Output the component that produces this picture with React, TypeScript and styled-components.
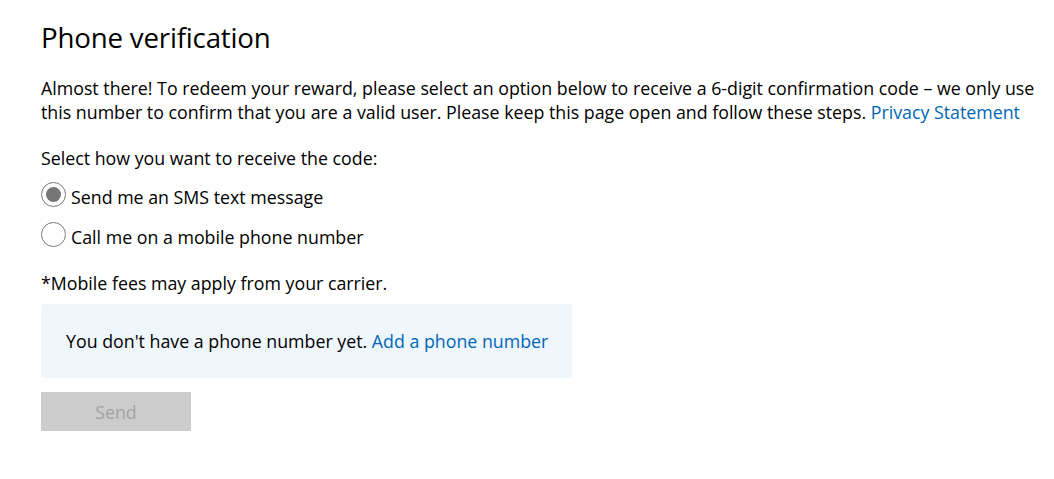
import styled, { createGlobalStyle } from "styled-components"

const GlobalStyle = createGlobalStyle`
  body {
    margin: 0;
    background: #ffffff;
    font-family: "Open Sans", "Noto Sans", sans-serif;
    color: #000000;
  }
`

const Page = styled.div`
  padding: 17px 0 0 41px;
  width: 1013px;
  height: 479px;
  box-sizing: border-box;
`

const Title = styled.h1`
  margin: 0;
  font-size: 27.7px;
  line-height: 40px;
  font-weight: 400;
  letter-spacing: -0.2px;
`

const Intro = styled.p`
  margin: 19px 0 0;
  font-size: 17.8px;
  line-height: 24px;
  white-space: nowrap;
`

const Link = styled.a`
  color: #0067b8;
  text-decoration: none;
  cursor: pointer;
`

const Label = styled.div`
  margin-top: 22px;
  font-size: 17.8px;
  line-height: 24px;
`

const Options = styled.div`
  display: flex;
  flex-direction: column;
  gap: 16px;
  margin-top: 15px;
`

const Option = styled.label`
  display: flex;
  align-items: center;
  gap: 5px;
  font-size: 17.8px;
  line-height: 24px;
  cursor: pointer;
`

const Radio = styled.span<{ $checked?: boolean }>`
  width: 25px;
  height: 25px;
  box-sizing: border-box;
  border: 1px solid #7a7a7a;
  border-radius: 50%;
  display: flex;
  align-items: center;
  justify-content: center;
  margin-top: -6px;
  &::after {
    content: "";
    width: 15px;
    height: 15px;
    border-radius: 50%;
    background: ${(p) => (p.$checked ? "#767676" : "transparent")};
  }
`

const Note = styled.div`
  margin-top: 22px;
  font-size: 17.8px;
  line-height: 24px;
`

const InfoBox = styled.div`
  margin-top: 9px;
  width: 531px;
  height: 74px;
  box-sizing: border-box;
  background: #eff6fc;
  border-radius: 2px;
  display: flex;
  align-items: center;
  padding-left: 25px;
  font-size: 17.8px;
`

const SendButton = styled.button`
  margin-top: 14px;
  width: 150px;
  height: 39px;
  border: none;
  background: #cccccc;
  color: #a2a2a2;
  font-family: inherit;
  font-size: 17.8px;
  cursor: default;
`

const App = () => {
  return (
    <Page>
      <GlobalStyle />
      <Title>Phone verification</Title>
      <Intro>
        Almost there! To redeem your reward, please select an option below to receive a 6-digit confirmation code – we only use
        <br />
        this number to confirm that you are a valid user. Please keep this page open and follow these steps. <Link>Privacy Statement</Link>
      </Intro>
      <Label>Select how you want to receive the code:</Label>
      <Options>
        <Option>
          <Radio $checked />
          Send me an SMS text message
        </Option>
        <Option>
          <Radio />
          Call me on a mobile phone number
        </Option>
      </Options>
      <Note>*Mobile fees may apply from your carrier.</Note>
      <InfoBox>
        <span>
          You don't have a phone number yet. <Link>Add a phone number</Link>
        </span>
      </InfoBox>
      <SendButton disabled>Send</SendButton>
    </Page>
  )
}

export default App
